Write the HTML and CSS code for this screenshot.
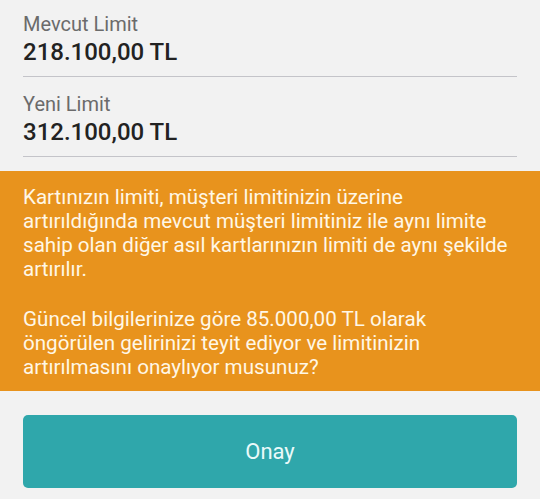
FILE: index.html
```html
<!DOCTYPE html>
<html lang="tr">
<head>
<meta charset="utf-8">
<title>Limit Artırımı</title>
<link rel="stylesheet" href="styles.css">
</head>
<body>
<div class="fields">
  <div class="field">
    <div class="label">Mevcut Limit</div>
    <div class="value">218.100,00 TL</div>
  </div>
  <div class="field">
    <div class="label">Yeni Limit</div>
    <div class="value">312.100,00 TL</div>
  </div>
</div>
<div class="notice">
  <p>Kartınızın limiti, müşteri limitinizin üzerine<br>artırıldığında mevcut müşteri limitiniz ile aynı limite<br>sahip olan diğer asıl kartlarınızın limiti de aynı şekilde<br>artırılır.</p>
  <p>Güncel bilgilerinize göre 85.000,00 TL olarak<br>öngörülen gelirinizi teyit ediyor ve limitinizin<br>artırılmasını onaylıyor musunuz?</p>
</div>
<div class="actions">
  <button class="btn">Onay</button>
</div>
</body>
</html>
```
FILE: styles.css
```css
html, body {
  margin: 0;
  padding: 0;
  background: #f2f2f2;
  font-family: Roboto, "Noto Sans", sans-serif;
}
.fields {
  padding: 0 23px;
}
.field {
  padding-top: 15px;
  padding-bottom: 10px;
  border-bottom: 1px solid #c4c4c9;
}
.field:first-child {
  padding-top: 12px;
}
.label {
  font-size: 20px;
  line-height: 24px;
  color: #6b6b6b;
  margin-bottom: 2px;
}
.value {
  font-size: 24px;
  line-height: 28px;
  font-weight: 500;
  color: #222222;
}
.notice {
  margin-top: 14px;
  background: #e8931d;
  color: #fff7e6;
  padding: 14px 23px 12px;
  font-size: 20.6px;
  line-height: 24px;
}
.notice p {
  margin: 0;
}
.notice p + p {
  margin-top: 26px;
}
.actions {
  padding: 24px 23px 0;
}
.btn {
  display: block;
  width: 100%;
  height: 73px;
  border: none;
  border-radius: 5px;
  background: #2fa7ab;
  color: #eafafa;
  font-family: Roboto, "Noto Sans", sans-serif;
  font-size: 22px;
  cursor: pointer;
}
```
